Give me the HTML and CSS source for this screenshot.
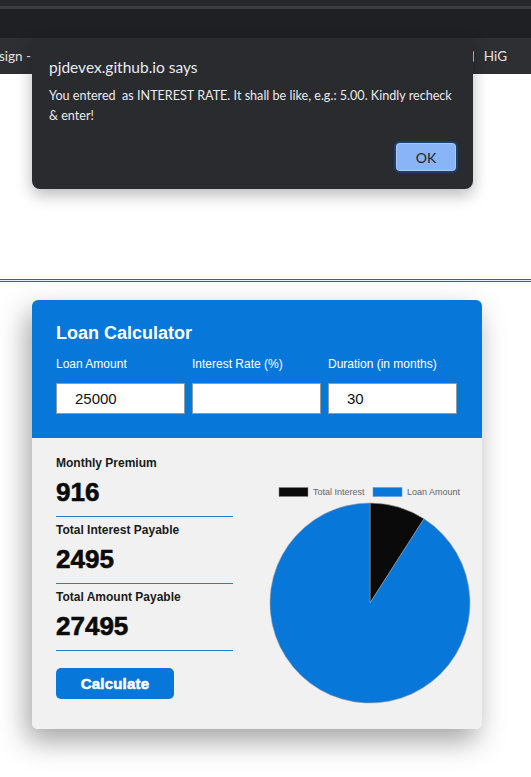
FILE: index.html
```html
<!DOCTYPE html>
<html lang="en">
<head>
<meta charset="utf-8">
<title>Loan Calculator</title>
<link rel="stylesheet" href="styles.css">
</head>
<body>
<div class="chrome">
  <div class="strip-top"></div>
  <div class="strip-line"></div>
  <div class="strip-tabs"></div>
  <div class="bookmarks">
    <span class="bm-left">sign - I</span>
    <span class="bm-right"><span class="folder"></span>HiG</span>
  </div>
</div>

<div class="dialog">
  <div class="dlg-title">pjdevex.github.io says</div>
  <div class="dlg-msg">You entered &nbsp;as INTEREST RATE. It shall be like, e.g.: 5.00. Kindly recheck &amp; enter!</div>
  <div class="dlg-actions"><button class="dlg-ok">OK</button></div>
</div>

<main class="page">
  <div class="rule"></div>
  <section class="card">
    <div class="card-head">
      <h1 class="title">Loan Calculator</h1>
      <div class="fields">
        <label class="field">
          <span class="field-label">Loan Amount</span>
          <input class="field-input" type="text" value="25000">
        </label>
        <label class="field">
          <span class="field-label">Interest Rate (%)</span>
          <input class="field-input" type="text" value="">
        </label>
        <label class="field">
          <span class="field-label">Duration (in months)</span>
          <input class="field-input" type="text" value="30">
        </label>
      </div>
    </div>
    <div class="card-body">
      <div class="results">
        <div class="result">
          <div class="result-label">Monthly Premium</div>
          <div class="result-value">916</div>
        </div>
        <div class="result">
          <div class="result-label">Total Interest Payable</div>
          <div class="result-value">2495</div>
        </div>
        <div class="result">
          <div class="result-label">Total Amount Payable</div>
          <div class="result-value">27495</div>
        </div>
        <button class="calc-btn">Calculate</button>
      </div>
      <div class="chart">
        <svg width="222" height="226" viewBox="0 0 222 226">
          <rect x="19" y="7.5" width="29" height="9" fill="#0a0a0a" stroke="#8a8a8a" stroke-width="0.5"/>
          <text x="53" y="14.5" class="legend-text">Total Interest</text>
          <rect x="113" y="7.5" width="29" height="9" fill="#0777d9" stroke="#5a9be0" stroke-width="0.5"/>
          <text x="147" y="14.5" class="legend-text">Loan Amount</text>
          <path d="M110 123 L110 23 A100 100 0 0 1 163.98 38.82 Z" fill="#0a0a0a" stroke="#9a9a9a" stroke-width="0.6"/>
          <path d="M110 123 L163.98 38.82 A100 100 0 1 1 110 23 Z" fill="#0777d9" stroke="#9a9a9a" stroke-width="0.6"/>
        </svg>
      </div>
    </div>
  </section>
</main>
</body>
</html>
```
FILE: styles.css
```css
* { box-sizing: border-box; }

body {
  margin: 0;
  background: #ffffff;
  font-family: "Liberation Sans", Arial, sans-serif;
  position: relative;
  overflow: hidden;
}

.chrome { display: flex; flex-direction: column; }
.strip-top { height: 6px; background: #27282b; }
.strip-line { height: 3px; background: #3b3c3f; }
.strip-tabs { height: 29px; background: #1f2023; }
.bookmarks {
  height: 36px;
  background: #2e2f32;
  display: flex;
  align-items: center;
  justify-content: space-between;
  padding: 0 24px 0 0;
  font-family: "Lato", "Open Sans", sans-serif;
  font-size: 13.5px;
  color: #e3e3e3;
}
.bm-left { margin-left: -1px; }
.bm-right { display: flex; align-items: center; gap: 10px; }
.folder {
  width: 8px;
  height: 11px;
  background: #d9c35b;
  border-radius: 1px;
}

.dialog {
  position: absolute;
  left: 32px;
  top: 38px;
  width: 441px;
  background: #2a2b2e;
  border-radius: 0 0 8px 8px;
  box-shadow: 0 6px 16px rgba(0, 0, 0, 0.28);
  padding: 19px 12px 16px 17px;
  font-family: "Lato", "Open Sans", sans-serif;
  color: #e8eaed;
  z-index: 2;
}
.dlg-title { font-size: 15.5px; line-height: 20px; }
.dlg-msg { margin-top: 9px; font-size: 12.6px; line-height: 20px; }
.dlg-actions { display: flex; justify-content: flex-end; margin-top: 15px; padding-right: 3px; }
.dlg-ok {
  width: 64px;
  height: 32px;
  background: #8ab4f8;
  border: 2px solid #1e3f6e;
  border-radius: 6px;
  box-shadow: inset 0 0 0 1px #a8c7fa;
  font-family: "Lato", "Open Sans", sans-serif;
  font-size: 14px;
  color: #1f1f1f;
}

.page { padding-top: 205px; padding-bottom: 60px; }
.rule {
  height: 3px;
  border-top: 1px solid #0a72c6;
  border-bottom: 1px solid #0a72c6;
  background: #e6f0f9;
}

.card {
  margin: 18px 0 0 32px;
  width: 450px;
  border-radius: 6px;
  overflow: hidden;
  box-shadow: -5px 12px 28px rgba(0, 0, 0, 0.36);
}

.card-head {
  background: #0777d9;
  padding: 22px 25px 24px 24px;
  color: #ffffff;
}
.title {
  margin: 0;
  font-size: 18px;
  line-height: 22px;
  font-weight: bold;
}
.fields {
  margin-top: 13px;
  display: grid;
  grid-template-columns: 129px 129px 129px;
  column-gap: 7px;
}
.field { display: flex; flex-direction: column; }
.field-label { font-size: 12px; line-height: 14px; }
.field-input {
  margin-top: 12px;
  width: 129px;
  height: 31px;
  border: 1px solid #8d99a6;
  background: #ffffff;
  padding: 0 0 0 18px;
  font-family: "Liberation Sans", Arial, sans-serif;
  font-size: 15px;
  color: #111111;
  outline: none;
}

.card-body {
  background: #f1f1f1;
  display: flex;
  align-items: flex-start;
  padding: 12px 0 0 24px;
}
.results {
  width: 177px;
  display: flex;
  flex-direction: column;
  padding-bottom: 30px;
}
.result {
  padding: 6px 0 9px 0;
  border-bottom: 1px solid #1f7fcf;
}
.result-label {
  font-size: 12px;
  line-height: 14px;
  font-weight: bold;
  color: #1a1a1a;
}
.result-value {
  margin-top: 7px;
  font-size: 26px;
  line-height: 30px;
  font-weight: bold;
  color: #0a0a0a;
  -webkit-text-stroke: 0.6px #0a0a0a;
}
.calc-btn {
  margin-top: 17px;
  width: 118px;
  height: 31px;
  border: 0;
  border-radius: 5px;
  background: #0777d9;
  color: #ffffff;
  font-family: "Liberation Sans", Arial, sans-serif;
  font-size: 15px;
  font-weight: bold;
  letter-spacing: 0.2px;
  -webkit-text-stroke: 0.5px #ffffff;
}

.chart { margin: 30px 0 0 27px; flex-shrink: 0; }
.chart svg { display: block; }
.legend-text {
  font-family: "Liberation Sans", Arial, sans-serif;
  font-size: 9px;
  fill: #666666;
}
```
